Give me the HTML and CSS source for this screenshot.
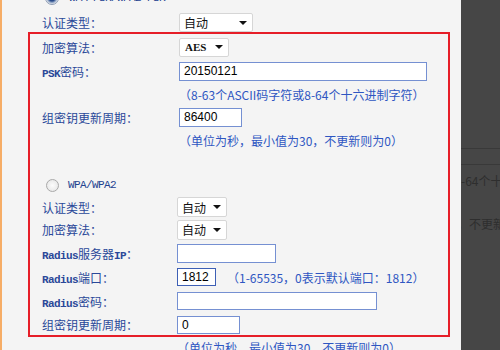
FILE: index.html
```html
<!DOCTYPE html>
<html lang="zh-CN">
<head>
<meta charset="utf-8">
<title>无线安全设置</title>
<link rel="stylesheet" href="styles.css">
</head>
<body>
<div class="page">
  <div class="content">
    <div class="row h24 first">
      <span class="radio on"></span><span class="mode">WPA-PSK/WPA2-PSK</span>
    </div>
    <div class="row h25">
      <span class="lbl">认证类型：</span>
      <div class="sel w74"><span>自动</span><i class="caret"></i></div>
    </div>
    <div class="row h24">
      <span class="lbl">加密算法：</span>
      <div class="sel w50"><span class="aes">AES</span><i class="caret"></i></div>
    </div>
    <div class="row h24">
      <span class="lbl"><span class="lat">PSK</span>密码：</span>
      <input class="inp w248" type="text" value="20150121">
    </div>
    <div class="row h22 hint">（8-63个ASCII码字符或8-64个十六进制字符）</div>
    <div class="row h24">
      <span class="lbl">组密钥更新周期：</span>
      <input class="inp w63" type="text" value="86400">
    </div>
    <div class="row h22 hint">（单位为秒，最小值为30，不更新则为0）</div>
    <div class="spacer"></div>

    <div class="sec2">
      <div class="row h22">
        <span class="radio"></span><span class="mode">WPA/WPA2</span>
      </div>
      <div class="row h22">
        <span class="lbl">认证类型：</span>
        <div class="sel w50 tall"><span>自动</span><i class="caret"></i></div>
      </div>
      <div class="row h23">
        <span class="lbl">加密算法：</span>
        <div class="sel w50 tall"><span>自动</span><i class="caret"></i></div>
      </div>
      <div class="row h24">
        <span class="lbl"><span class="lat">Radius</span>服务器<span class="lat">IP</span>：</span>
        <input class="inp w99" type="text" value="">
      </div>
      <div class="row h24">
        <span class="lbl"><span class="lat">Radius</span>端口：</span>
        <input class="inp w39 short dark" type="text" value="1812">
        <span class="hint-inline">（1-65535，0表示默认端口：1812）</span>
      </div>
      <div class="row h24">
        <span class="lbl"><span class="lat">Radius</span>密码：</span>
        <input class="inp w200 short" type="text" value="">
      </div>
      <div class="row h23">
        <span class="lbl">组密钥更新周期：</span>
        <input class="inp w63 short" type="text" value="0">
      </div>
      <div class="row h22 hint">（单位为秒，最小值为30，不更新则为0）</div>
    </div>
  </div>
  <div class="side">
    <div class="sline first-line"></div>
    <div class="sline second-line"></div>
    <div class="stext t1">-64个十六</div>
    <div class="stext t2">，不更新</div>
  </div>
  <div class="annot"></div>
</div>
</body>
</html>
```

FILE: styles.css
```css
html, body {
  margin: 0;
  padding: 0;
}
body {
  width: 500px;
  height: 350px;
  overflow: hidden;
  background: #f4f4f4;
  font-family: "Noto Sans CJK SC", "Liberation Sans", sans-serif;
  font-size: 12px;
}
.page {
  position: relative;
  display: flex;
  height: 350px;
}
.content {
  flex: 0 0 419px;
  border-left: 2px solid #f6ad66;
  background: #f4f4f4;
  padding-left: 40px;
  display: flex;
  flex-direction: column;
  overflow: hidden;
}
.side {
  flex: 1;
  background: #464646;
  display: flex;
  flex-direction: column;
  overflow: hidden;
}
.row {
  display: flex;
  align-items: center;
  flex: none;
  white-space: nowrap;
}
.first { margin-top: -14px; }
.h22 { height: 22px; }
.h23 { height: 23px; }
.h24 { height: 24px; }
.h25 { height: 25px; }
.spacer { height: 23px; flex: none; }

.lbl {
  width: 137px;
  flex: none;
  color: #2a4899;
}
.sec2 .lbl { width: 135px; }
.lat {
  font-family: "Liberation Mono", monospace;
  font-size: 11px;
  letter-spacing: -0.6px;
  font-weight: bold;
}
.hint {
  padding-left: 137px;
  color: #2e56c2;
}
.sec2 .hint { padding-left: 135px; }
.hint-inline {
  margin-left: 11px;
  color: #2e56c2;
}

.radio {
  width: 13px;
  height: 13px;
  box-sizing: border-box;
  border-radius: 50%;
  border: 1px solid #a9a9a9;
  background: radial-gradient(circle, #fcfcfc 0, #e2e2e2 100%);
  margin-left: 4px;
  margin-right: 9px;
  flex: none;
}
.radio.on {
  margin-left: 3px;
  margin-right: 10px;
  width: 14px;
  height: 14px;
  border-color: #8c9bb3;
  background: radial-gradient(circle, #1d3a78 0, #2a4c8c 3px, #8ea3c4 4.5px, #e6e9ef 6px);
}
.mode {
  font-family: "Liberation Mono", monospace;
  font-size: 11px;
  letter-spacing: -0.6px;
  color: #23418f;
}

.sel {
  box-sizing: border-box;
  height: 19px;
  display: flex;
  align-items: center;
  justify-content: space-between;
  background: #fff;
  border: 1px solid #d6d6d6;
  border-radius: 2px;
  padding: 0 5px 0 4px;
  color: #111;
  flex: none;
}
.sel.tall { height: 20px; }
.aes {
  font-family: "Liberation Serif", serif;
  font-size: 11px;
  font-weight: bold;
  padding-left: 1px;
}
.caret {
  width: 0;
  height: 0;
  border-left: 4px solid transparent;
  border-right: 4px solid transparent;
  border-top: 4px solid #111;
}
.w74 { width: 74px; }
.w50 { width: 50px; }

.inp {
  box-sizing: border-box;
  height: 19px;
  margin: 0;
  border: 1px solid #7590d2;
  background: #fff;
  padding: 0 4px;
  font-family: "Liberation Sans", sans-serif;
  font-size: 12px;
  color: #000;
  outline: none;
  flex: none;
}
.inp.short { height: 18px; }
.inp.dark { border-color: #3d5fb5; }
.w248 { width: 248px; }
.w63 { width: 63px; }
.w99 { width: 99px; }
.w39 { width: 39px; }
.w200 { width: 200px; }

.sline {
  height: 1px;
  background: #393939;
  flex: none;
}
.first-line { margin-top: 148px; }
.second-line { margin-top: 15px; }
.stext {
  color: #2e2e2e;
  white-space: nowrap;
  flex: none;
  line-height: 17px;
}
.t1 { margin-top: 7px; }
.t2 { margin-top: 26px; margin-left: -4px; }

.annot {
  position: absolute;
  left: 28px;
  top: 32px;
  width: 418px;
  height: 301px;
  border: 2px solid #e61e28;
  pointer-events: none;
}
```
